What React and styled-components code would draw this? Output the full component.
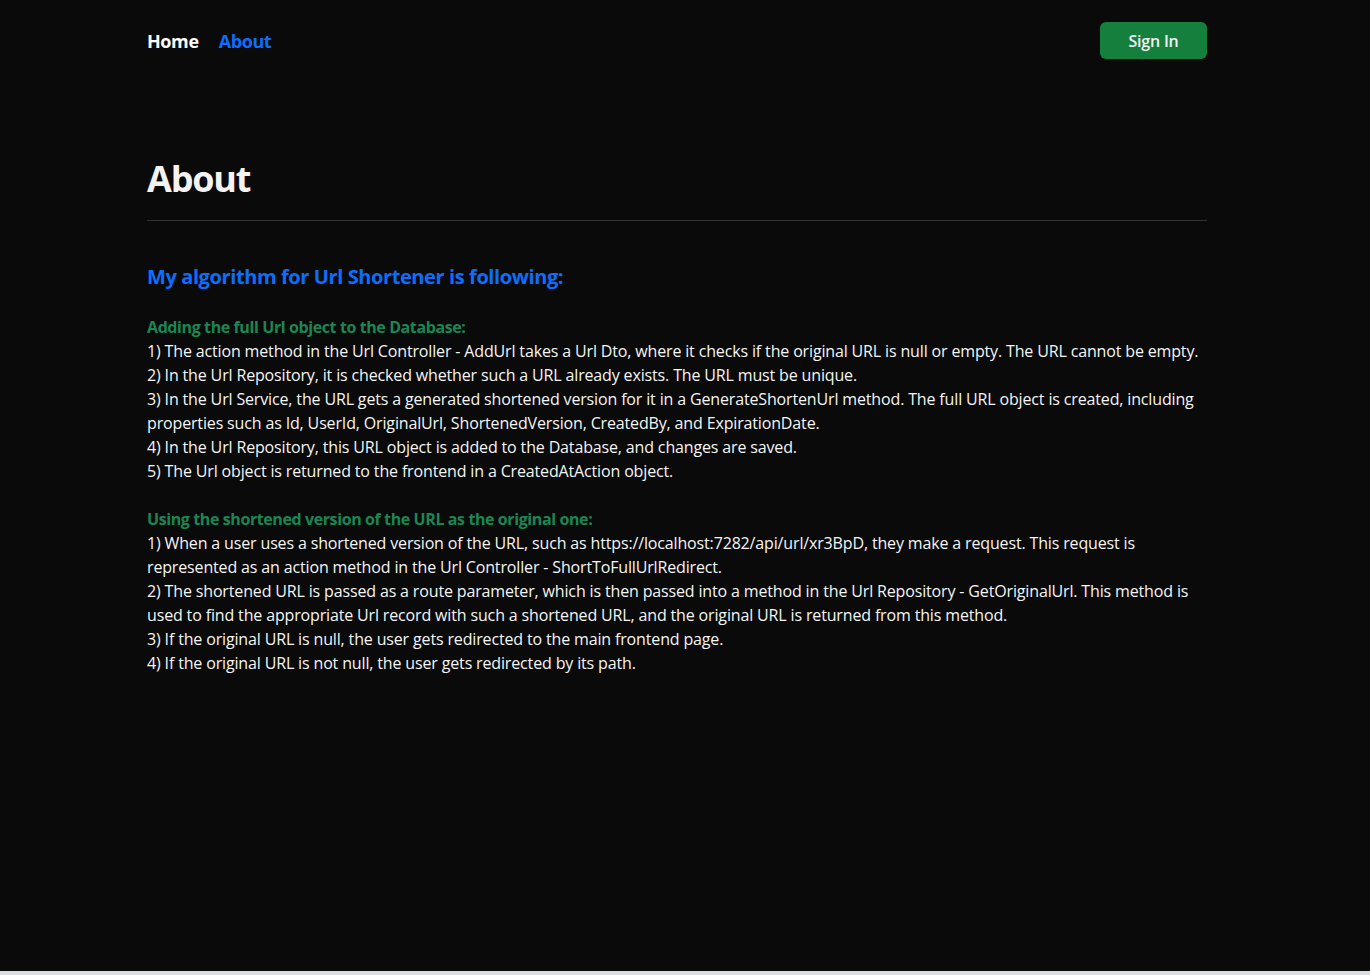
import React from 'react';
import styled, { createGlobalStyle } from 'styled-components';

const GlobalStyle = createGlobalStyle`
  html, body {
    margin: 0;
    padding: 0;
    background: #dcdde0;
  }

  body {
    font-family: "Open Sans", "Noto Sans", sans-serif;
  }
`;

const Page = styled.div`
  background: #0a0a0a;
  color: #f3f3f3;
  min-height: 971px;
`;

const Container = styled.div`
  width: 1060px;
  margin-left: 147px;
`;

const Nav = styled.nav`
  align-items: center;
  display: flex;
  justify-content: space-between;
  padding-top: 22px;
`;

const NavLinks = styled.div`
  display: flex;
  gap: 20px;
`;

const NavLink = styled.a`
  color: ${({ active }) => (active ? '#0d6efd' : '#ffffff')};
  cursor: pointer;
  font-size: 18px;
  font-weight: 700;
  letter-spacing: -0.4px;
  text-decoration: none;
`;

const SignInButton = styled.button`
  background: #157f3d;
  border: none;
  border-radius: 6px;
  color: #f3f3f3;
  cursor: pointer;
  font-family: inherit;
  font-size: 16px;
  font-weight: 600;
  height: 37px;
  letter-spacing: -0.2px;
  padding: 0;
  white-space: nowrap;
  width: 107px;
`;

const Title = styled.h1`
  color: #f3f3f3;
  font-size: 36px;
  font-weight: 700;
  letter-spacing: -1.2px;
  line-height: 43px;
  margin: 98px 0 0;
`;

const Divider = styled.hr`
  border: none;
  border-top: 1px solid #333333;
  margin: 20px 0 0;
`;

const Subtitle = styled.h3`
  color: #0d6efd;
  font-size: 20px;
  font-weight: 700;
  letter-spacing: -0.4px;
  line-height: 24px;
  margin: 44px 0 26px;
`;

const Section = styled.section`
  font-size: 16px;
  letter-spacing: -0.15px;
  line-height: 24px;
  margin-bottom: 24px;
`;

const SectionLabel = styled.div`
  color: #198754;
  font-weight: 700;
  letter-spacing: -0.4px;
`;

const Step = styled.div`
  color: #f5f5f5;
  font-weight: 500;
`;

const adding = [
  '1) The action method in the Url Controller - AddUrl takes a Url Dto, where it checks if the original URL is null or empty. The URL cannot be empty.',
  '2) In the Url Repository, it is checked whether such a URL already exists. The URL must be unique.',
  '3) In the Url Service, the URL gets a generated shortened version for it in a GenerateShortenUrl method. The full URL object is created, including properties such as Id, UserId, OriginalUrl, ShortenedVersion, CreatedBy, and ExpirationDate.',
  '4) In the Url Repository, this URL object is added to the Database, and changes are saved.',
  '5) The Url object is returned to the frontend in a CreatedAtAction object.',
];

const using = [
  '1) When a user uses a shortened version of the URL, such as https://localhost:7282/api/url/xr3BpD, they make a request. This request is represented as an action method in the Url Controller - ShortToFullUrlRedirect.',
  '2) The shortened URL is passed as a route parameter, which is then passed into a method in the Url Repository - GetOriginalUrl. This method is used to find the appropriate Url record with such a shortened URL, and the original URL is returned from this method.',
  '3) If the original URL is null, the user gets redirected to the main frontend page.',
  '4) If the original URL is not null, the user gets redirected by its path.',
];

const sections = [
  { label: 'Adding the full Url object to the Database:', steps: adding },
  { label: 'Using the shortened version of the URL as the original one:', steps: using },
];

export default function App() {
  return (
    <Page>
      <GlobalStyle />
      <Container>
        <Nav>
          <NavLinks>
            <NavLink>Home</NavLink>
            <NavLink active>About</NavLink>
          </NavLinks>
          <SignInButton>Sign In</SignInButton>
        </Nav>

        <Title>About</Title>
        <Divider />

        <Subtitle>My algorithm for Url Shortener is following:</Subtitle>

        {sections.map(section => (
          <Section key={section.label}>
            <SectionLabel>{section.label}</SectionLabel>
            {section.steps.map(step => <Step key={step}>{step}</Step>)}
          </Section>
        ))}
      </Container>
    </Page>
  );
}
